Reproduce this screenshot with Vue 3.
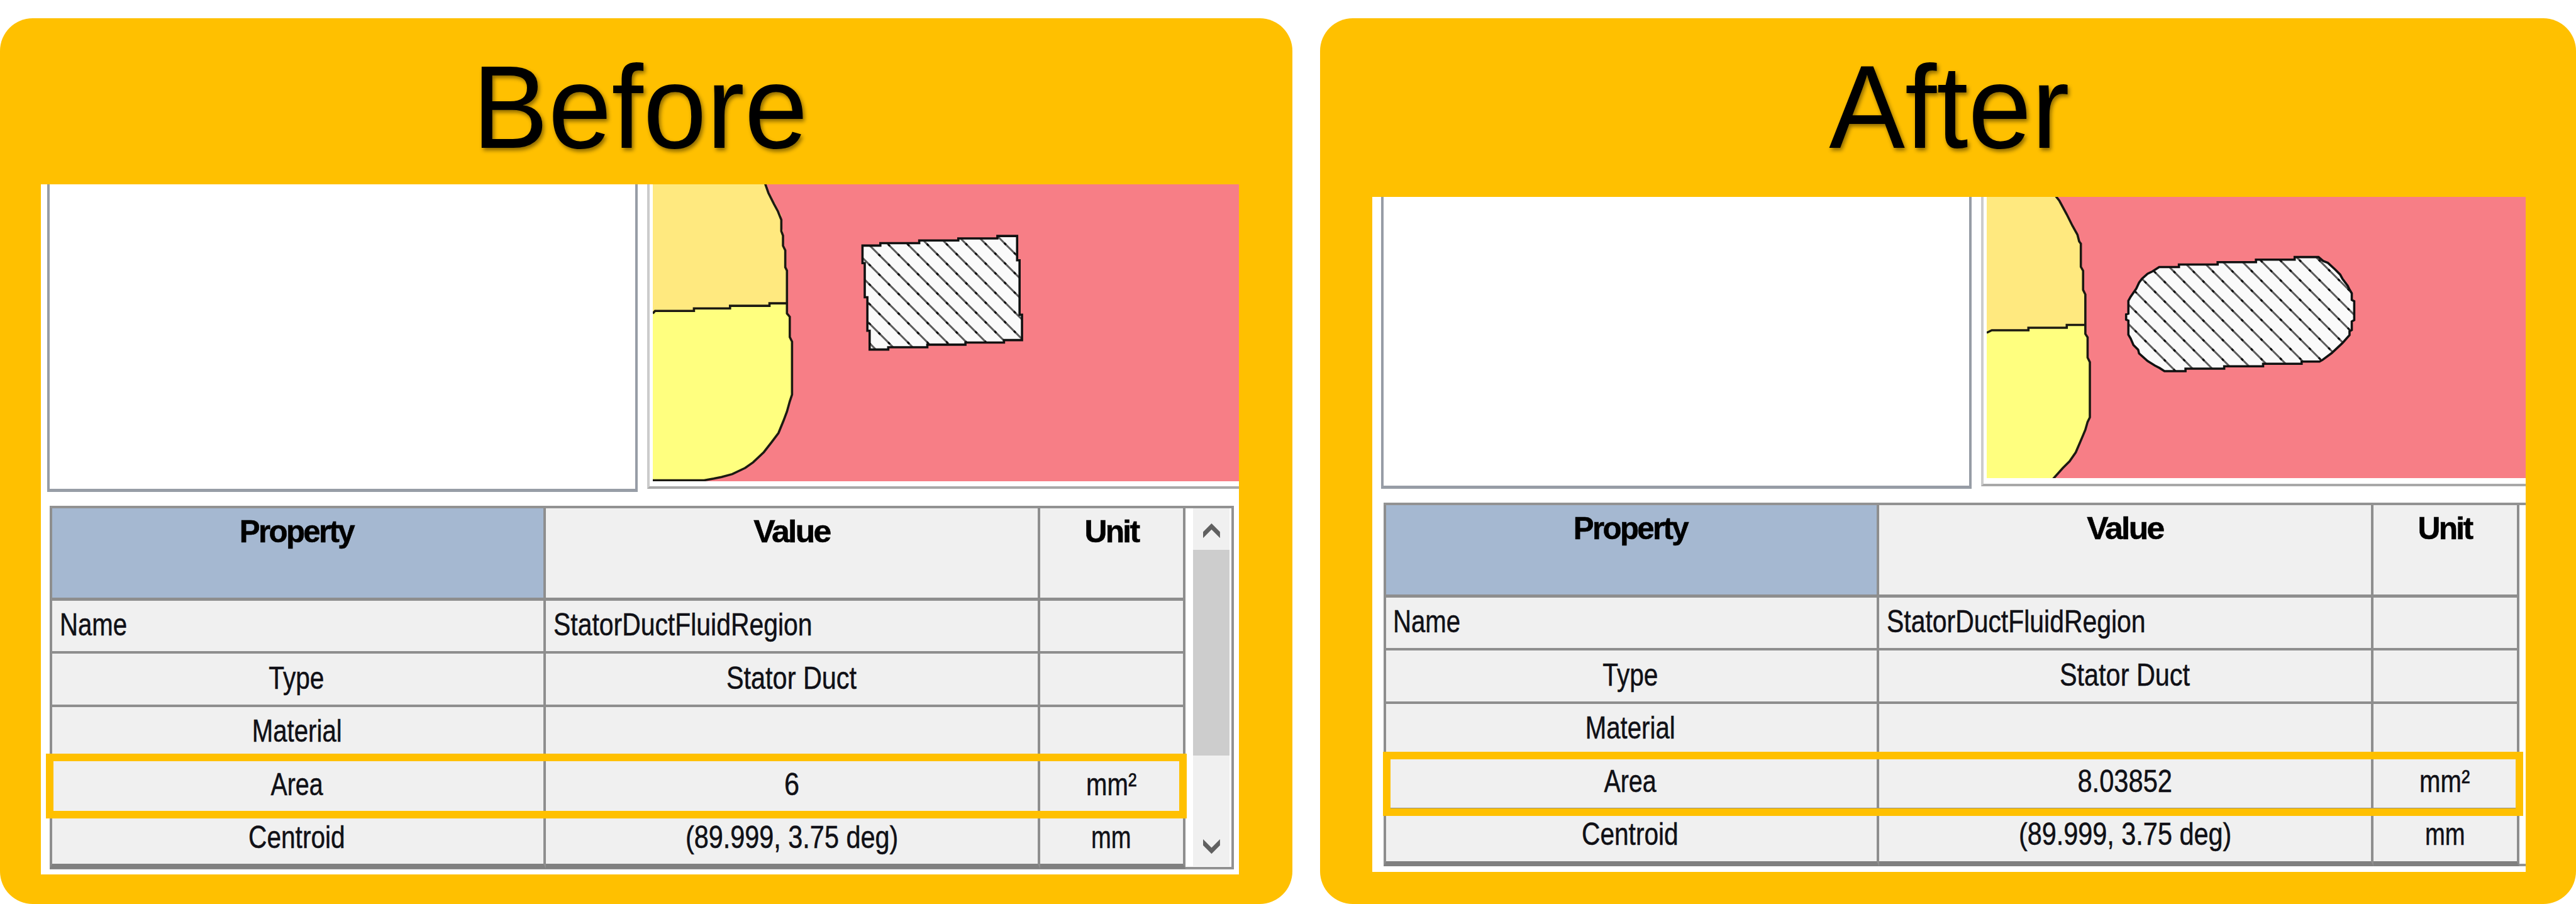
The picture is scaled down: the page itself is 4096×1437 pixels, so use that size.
<script setup>
const steps = (count, first, gap) => Array.from({ length: count }, (_, i) => first - i * gap)

const head = [
  { t: 'Property', k: 0.98 },
  { t: 'Value', k: 1.03 },
  { t: 'Unit', k: 0.99 },
]

const rows = (area, areaScale) => [
  [{ t: 'Name', k: 0.8, left: true }, { t: 'StatorDuctFluidRegion', k: 0.815, left: true }, { t: '', k: 1 }],
  [{ t: 'Type', k: 0.81 }, { t: 'Stator Duct', k: 0.825 }, { t: '', k: 1 }],
  [{ t: 'Material', k: 0.8 }, { t: '', k: 1 }, { t: '', k: 1 }],
  [{ t: 'Area', k: 0.785 }, { t: area, k: areaScale }, { t: 'mm²', k: 0.8 }],
  [{ t: 'Centroid', k: 0.81 }, { t: '(89.999, 3.75 deg)', k: 0.825 }, { t: 'mm', k: 0.76 }],
]

const cards = [
  {
    id: 'before',
    title: 'Before',
    rows: rows('6', 0.86),
    scroll: true,
    view: '1158 327 1040 527',
    upper: 'M1158 327H1357L1386 382V398L1389 410V436L1393 444V474L1396 480V538H1365V542.5H1295V547H1231V551.5H1158Z',
    lower: 'M1158 551.5H1231V547H1295V542.5H1365V538H1396V556L1401 562V598L1405 606V700L1401 712L1396 730L1390 746L1381 768L1369 784L1355 802L1336 820L1322 830L1299 841L1280 846L1266 849L1249 852H1158Z',
    outline: 'M1357 325L1363 342L1373 362L1380 375L1386 390V410L1389 418V436L1393 444V474L1396 480V556L1401 562V598L1405 606V700L1401 712L1396 730L1390 746L1381 768L1369 784L1355 802L1336 820L1322 830L1299 841L1280 846L1266 849L1249 852H1158',
    divider: 'M1158 556L1162 551.5H1231V547H1295V542.5H1365V538H1396',
    origin: 'translate(1490 390) scale(0.33333)',
    duct: 'M120 137H215V124H422V110H630V99H838V86H943V215H956V505H969V640H873V653H668V664H465V678H257V690H158V590H146V412H132V230H120Z',
    hatch: steps(13, 499, 104.2),
    hatchX: 4,
  },
  {
    id: 'after',
    title: 'After',
    rows: rows('8.03852', 0.83),
    scroll: false,
    view: '3523 349 958 499.5',
    upper: 'M3523 349H3646L3665 378L3684 416L3690 432V473L3694 480V514L3698 522V576H3665V581H3597V585.5H3523Z',
    lower: 'M3523 585.5H3597V581H3665V576H3698V592L3702 598V634L3706 642V740L3702 748L3698 762L3693 774L3687 788L3681 802L3670 818L3658 830L3640 850H3523Z',
    outline: 'M3645 347L3652 356L3665 380L3675 400L3684 416L3687 428L3690 432V473L3694 480V514L3698 522V592L3702 598V634L3706 642V740L3702 748L3698 762L3693 774L3687 788L3681 802L3670 818L3658 830L3640 850',
    divider: 'M3523 590L3532 585.5H3597V581H3665V576H3698',
    origin: 'translate(3730 430) scale(0.33333)',
    duct: 'M297 130H402V117H608V104H812V91H1018V77H1145L1170 98L1195 108L1232 142L1260 170L1272 192L1300 230L1310 250L1322 270V305L1335 312V412L1322 420V465L1310 472V492L1272 535L1215 588L1165 625L1150 633H1055V645H850V658H643V671H437V684H325L300 668L275 655L235 630L190 590L185 570L160 545L145 510L133 490V415L121 410V382L133 378V310L145 288L175 245L190 213L205 193L235 166L262 153Z',
    hatch: steps(14, 300, 104.2),
    hatchX: 18,
  },
]
</script>

<template>
  <main class="stage">
    <section v-for="c in cards" :key="c.id" class="card" :class="c.id">
      <h1 class="title">{{ c.title }}</h1>
      <div class="shot">
        <div class="top">
          <div class="tree"></div>
          <div class="preview">
            <svg class="drawing" :viewBox="c.view" preserveAspectRatio="none">
              <defs>
                <clipPath :id="'duct-' + c.id"><path :d="c.duct" /></clipPath>
              </defs>
              <path :d="c.upper" fill="#ffe97f" />
              <path :d="c.lower" fill="#ffff7f" />
              <g fill="none" stroke="#1c1a12" stroke-width="4">
                <path :d="c.outline" />
                <path :d="c.divider" />
              </g>
              <g :transform="c.origin">
                <path :d="c.duct" fill="#fafafa" />
                <g :clip-path="`url(#duct-${c.id})`">
                  <g v-for="h in c.hatch" :key="h">
                    <line :x1="c.hatchX" :y1="c.hatchX + h" :x2="c.hatchX + 1400" :y2="c.hatchX + h + 1400" stroke="#5c5c5c" stroke-width="10" />
                    <line :x1="c.hatchX - 5" :y1="c.hatchX - 5 + h" :x2="c.hatchX + 1400" :y2="c.hatchX + h + 1400" stroke="#111" stroke-width="10" stroke-dasharray="14 58.8" />
                  </g>
                </g>
                <path :d="c.duct" fill="none" stroke="#111" stroke-width="12" />
              </g>
            </svg>
          </div>
        </div>
        <div class="sheet">
          <div class="grid">
            <div v-for="(h, i) in head" :key="h.t" class="cell head" :class="{ first: i === 0, picked: i === 0 }">
              <span :style="{ transform: `scaleX(${h.k})` }">{{ h.t }}</span>
            </div>
            <template v-for="(r, ri) in c.rows" :key="ri">
              <div
                v-for="(d, di) in r"
                :key="di"
                class="cell"
                :class="{ first: di === 0, left: d.left, last: ri === c.rows.length - 1 }"
              >
                <span :style="{ transform: `scaleX(${d.k})` }">{{ d.t }}</span>
              </div>
            </template>
          </div>
          <div v-if="c.scroll" class="scroll">
            <svg class="arrow" viewBox="0 0 30 26"><path d="M15 0L30 15V26L15 11L0 26V15Z" fill="#606060" /></svg>
            <div class="thumb"></div>
            <svg class="arrow" viewBox="0 0 30 26"><path d="M15 26L30 11V0L15 15L0 0V11Z" fill="#606060" /></svg>
          </div>
        </div>
        <div class="highlight"></div>
      </div>
    </section>
  </main>
</template>

<style>
html {
  font-size: calc(100vw / 45.7);
  background: #fff;
}
body {
  margin: 0;
  overflow: hidden;
}
</style>

<style scoped>
.stage {
  display: flex;
  gap: 0.49rem;
  box-sizing: border-box;
  height: 100vh;
  padding-top: 0.32rem;
  background: #fff;
  font-family: "Liberation Sans", Arial, sans-serif;
  color: #000;
}
.card {
  box-sizing: border-box;
  background: #ffc000;
  border-radius: 0.58rem;
  display: flex;
  flex-direction: column;
}
.before {
  width: 22.93rem;
  padding: 0.41rem 0.95rem 0 0.73rem;
  --title: 2.54rem;
  --shot-h: 12.24rem;
  --tree-gap: 0.105rem;
  --tree-h: 5.45rem;
  --view-w: 10.4rem;
  --view-h: 5.27rem;
  --sheet-gap: 0.155rem;
  --mark-x: 0.09rem;
  --mark-y: 10.1rem;
  --mark-h: 1.15rem;
}
.after {
  width: 22.28rem;
  padding: 0.41rem 0.89rem 0 0.93rem;
  --title: 2.76rem;
  --shot-h: 11.97rem;
  --tree-gap: 0.147rem;
  --tree-h: 5.175rem;
  --view-w: 9.58rem;
  --view-h: 4.995rem;
  --sheet-gap: 0.192rem;
  --mark-x: 0.18rem;
  --mark-y: 9.84rem;
  --mark-h: 1.14rem;
}
.title {
  margin: 0;
  height: var(--title);
  flex: none;
  font-size: 2.02rem;
  font-weight: 400;
  line-height: 2.4rem;
  text-align: center;
  transform: scaleY(1.035);
  transform-origin: 50% 1.9rem;
  text-shadow: 0.03rem 0.04rem 0.07rem rgba(0, 0, 0, 0.45);
}
.shot {
  position: relative;
  flex: none;
  height: var(--shot-h);
  background: #fff;
  overflow: hidden;
}
.top {
  display: flex;
  align-items: flex-start;
  padding-left: var(--tree-gap);
  height: var(--tree-h);
}
.tree {
  box-sizing: border-box;
  flex: none;
  width: 10.48rem;
  height: 100%;
  border: solid #979da6;
  border-width: 0 0.045rem 0.056rem;
  margin-right: 0.165rem;
}
.preview {
  flex: none;
  padding: 0 0 0.09rem 0.055rem;
  border-left: 0.045rem solid #cbcbcb;
  border-bottom: 0.045rem solid #a8a8a8;
}
.drawing {
  display: block;
  width: var(--view-w);
  height: var(--view-h);
  background: #f77e86;
}
.sheet {
  display: flex;
  margin: 0.253rem 0 0 var(--sheet-gap);
  box-sizing: border-box;
  width: 21.003rem;
  height: 6.442rem;
  border: solid #929292;
  border-width: 0.045rem 0.045rem 0.045rem 0;
}
.grid {
  flex: none;
  display: grid;
  grid-template-columns: 8.8rem 8.77rem 2.58rem;
  grid-template-rows: 1.635rem 0.94rem 0.944rem 0.944rem 0.944rem 0.99rem;
}
.cell {
  box-sizing: border-box;
  padding: 0.14rem 0.14rem 0 0.13rem;
  background: #f0f0f0;
  border: solid #8e8e8e;
  border-width: 0 0.045rem 0.045rem 0;
  font-size: 0.56rem;
  line-height: 0.6rem;
  text-align: center;
  white-space: nowrap;
  color: #101016;
  -webkit-text-stroke: 0.006rem currentColor;
}
.cell span {
  display: inline-block;
}
.first {
  border-left-width: 0.045rem;
  padding-right: 0.17rem;
}
.left {
  text-align: left;
}
.left span {
  transform-origin: 0 50%;
}
.head {
  padding-top: 0.125rem;
  font-weight: 700;
  letter-spacing: -0.03rem;
  color: #000;
  border-bottom-width: 0.056rem;
}
.picked {
  background: #a5b8d1;
}
.last {
  border-bottom: 0.09rem solid #808080;
}
.scroll {
  box-sizing: border-box;
  width: 0.65rem;
  height: 6.35rem;
  margin-left: 0.13rem;
  padding: 0.262rem 0 0.22rem;
  background: #f0f0f0;
  display: flex;
  flex-direction: column;
  align-items: center;
}
.arrow {
  width: 0.3rem;
  height: 0.26rem;
  flex: none;
}
.thumb {
  width: 100%;
  height: 3.65rem;
  margin: 0.21rem 0 auto;
  background: #cdcdcd;
}
.highlight {
  position: absolute;
  box-sizing: border-box;
  left: var(--mark-x);
  top: var(--mark-y);
  width: 20.23rem;
  height: var(--mark-h);
  border: 0.145rem solid #ffc000;
}
</style>
